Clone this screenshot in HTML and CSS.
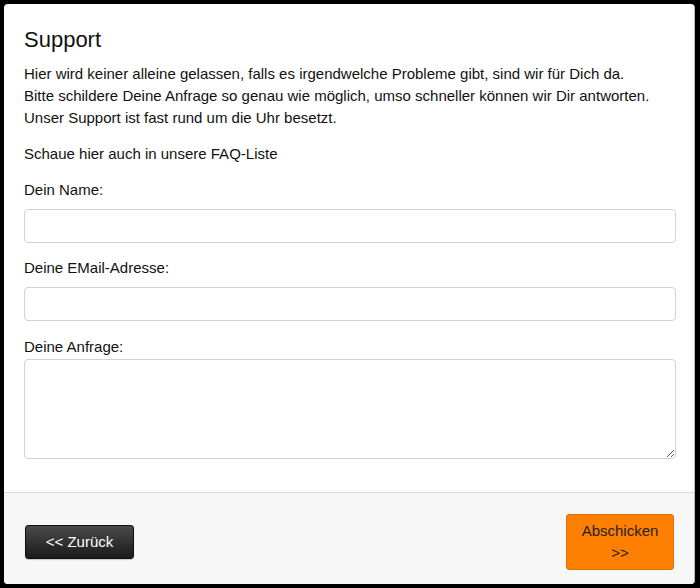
FILE: index.html
```html
<!DOCTYPE html>
<html lang="de">
<head>
<meta charset="utf-8">
<title>Support</title>
<link rel="stylesheet" href="styles.css">
</head>
<body>
<div class="modal">
  <div class="modal-body">
    <h2 class="title">Support</h2>
    <p class="intro">Hier wird keiner alleine gelassen, falls es irgendwelche Probleme gibt, sind wir für Dich da.<br>Bitte schildere Deine Anfrage so genau wie möglich, umso schneller können wir Dir antworten.<br>Unser Support ist fast rund um die Uhr besetzt.</p>
    <p class="faq">Schaue hier auch in unsere FAQ-Liste</p>
    <label class="label">Dein Name:</label>
    <input class="field" type="text">
    <label class="label">Deine EMail-Adresse:</label>
    <input class="field" type="text">
    <label class="label label-area">Deine Anfrage:</label>
    <textarea class="area"></textarea>
  </div>
  <div class="modal-footer">
    <button class="btn btn-back">&lt;&lt; Zurück</button>
    <button class="btn btn-send">Abschicken<br>&gt;&gt;</button>
  </div>
</div>
</body>
</html>
```

FILE: styles.css
```css
html, body {
  margin: 0;
  padding: 0;
  background: #000;
}
body {
  padding: 4px 5px 4px 4px;
  font-family: "Liberation Sans", Arial, sans-serif;
  color: #111;
}
.modal {
  background: #fff;
  border-radius: 4px;
  border-right: 1px solid #bbb;
  height: 580px;
  display: flex;
  flex-direction: column;
  overflow: hidden;
}
.modal-body {
  padding: 23px 18px 0 20px;
  height: 465px;
  display: flex;
  flex-direction: column;
}
.title {
  margin: 0;
  font-size: 22px;
  font-weight: normal;
  line-height: 26px;
}
.intro {
  margin: 10px 0 0;
  font-size: 15px;
  line-height: 22px;
}
.faq {
  margin: 14px 0 0;
  font-size: 15px;
  line-height: 22px;
}
.label {
  display: block;
  margin-top: 14px;
  font-size: 15px;
  line-height: 22px;
}
.label-area {
  margin-top: 15px;
}
.field {
  display: block;
  box-sizing: border-box;
  margin: 8px 0 0;
  width: 100%;
  height: 34px;
  border: 1px solid #d3d3d3;
  border-radius: 4px;
  background: #fff;
  font: inherit;
}
.area {
  display: block;
  box-sizing: border-box;
  margin: 1px 0 0;
  width: 100%;
  height: 100px;
  border: 1px solid #d3d3d3;
  border-radius: 4px;
  background: #fff;
  resize: vertical;
  font: inherit;
}
.modal-footer {
  flex: 1;
  background: #f7f7f7;
  border-top: 1px solid #ddd;
  padding: 21px 20px 14px 21px;
  display: flex;
  justify-content: space-between;
  align-items: center;
}
.btn {
  font-family: "Liberation Sans", Arial, sans-serif;
  font-size: 15px;
  line-height: 22px;
  border-radius: 3px;
  cursor: pointer;
}
.btn-back {
  width: 109px;
  height: 34px;
  padding: 0;
  color: #fff;
  background: linear-gradient(#4a4a4a, #1a1a1a);
  border: 1px solid #111;
  box-shadow: 0 1px 1px rgba(0,0,0,0.2);
}
.btn-send {
  width: 108px;
  height: 56px;
  padding: 5px 0;
  color: #222;
  background: #ff7f00;
  border: 1px solid #e06e00;
}
```
